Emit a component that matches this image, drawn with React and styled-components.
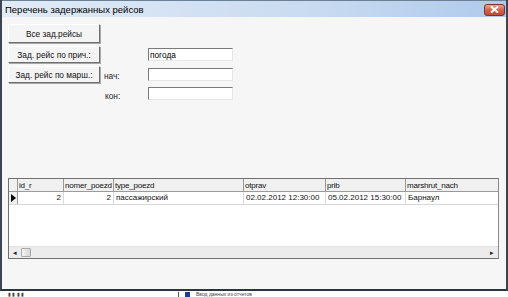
import React from "react";
import styled, { createGlobalStyle } from "styled-components";

const columns = [
  { key: "id_r", title: "id_r", width: 46, align: "right" },
  { key: "nomer_poezd", title: "nomer_poezd", width: 50, align: "right" },
  { key: "type_poezd", title: "type_poezd", width: 130, align: "left" },
  { key: "otprav", title: "otprav", width: 82, align: "left" },
  { key: "prib", title: "prib", width: 80, align: "left" },
  { key: "marshrut_nach", title: "marshrut_nach", width: 94, align: "left" },
];

const rows = [
  {
    id_r: "2",
    nomer_poezd: "2",
    type_poezd: "пассажирский",
    otprav: "02.02.2012 12:30:00",
    prib: "05.02.2012 15:30:00",
    marshrut_nach: "Барнаул",
  },
];

const App = () => {
  return (
    <>
      <Global />
      <Window>
        <TitleBar>
          <span>Перечень задержанных рейсов</span>
          <CloseButton>
            <svg width="9" height="7" viewBox="0 0 9 7">
              <path d="M1 0.5 L8 6.5 M8 0.5 L1 6.5" stroke="#fff" strokeWidth="2" />
            </svg>
          </CloseButton>
        </TitleBar>
        <Body>
          <Controls>
            <Button style={{ gridRow: 1 }}>Все зад.рейсы</Button>
            <Button style={{ gridRow: 2 }}>Зад. рейс по прич.:</Button>
            <Input style={{ gridRow: 2 }} defaultValue="погода" />
            <Button style={{ gridRow: 3 }}>Зад. рейс по марш.:</Button>
            <Label style={{ gridRow: 3 }}>нач:</Label>
            <Input style={{ gridRow: 3 }} />
            <Label style={{ gridRow: 4 }} $indent>кон:</Label>
            <Input style={{ gridRow: 4 }} />
          </Controls>
          <Grid>
            <HeaderRow>
              <Selector />
              {columns.map((c) => (
                <HeadCell key={c.key} $w={c.width}>
                  {c.title}
                </HeadCell>
              ))}
            </HeaderRow>
            {rows.map((r, i) => (
              <DataRow key={i}>
                <Selector>
                  <Arrow />
                </Selector>
                {columns.map((c) => (
                  <Cell key={c.key} $w={c.width} $align={c.align}>
                    {r[c.key]}
                  </Cell>
                ))}
              </DataRow>
            ))}
            <Empty />
            <ScrollBar>
              <ScrollArrow>◂</ScrollArrow>
              <Thumb />
              <Track />
              <ScrollArrow>▸</ScrollArrow>
            </ScrollBar>
          </Grid>
        </Body>
      </Window>
      <Desktop>
        <Fragment>▮ ▮ ▮ ▮</Fragment>
        <TaskIcon />
        <Fragment>Ввод данных из отчетов</Fragment>
      </Desktop>
    </>
  );
};

export default App;

const Global = createGlobalStyle`
  html, body {
    margin: 0;
    padding: 0;
    background: #ffffff;
    overflow: hidden;
  }
  body {
    font-family: "Liberation Sans", Arial, sans-serif;
  }
`;

const Window = styled.div`
  width: 504px;
  height: 289px;
  display: flex;
  flex-direction: column;
  border-left: 2px solid #3c4650;
  border-right: 2px solid #3c4650;
  border-bottom: 2px solid #2b3540;
  box-shadow: 0 1px 0 #40a8d0;
`;

const TitleBar = styled.div`
  height: 17px;
  display: flex;
  align-items: center;
  justify-content: space-between;
  padding: 0 1px 0 3px;
  border-top: 1px solid #6b7f95;
  background: linear-gradient(to right, #e2ebf6, #c9dbf0 60%, #afcaec);
  font-size: 9.5px;
  color: #000;
  box-sizing: border-box;
`;

const CloseButton = styled.div`
  width: 21px;
  height: 12px;
  border: 1px solid #7a3530;
  border-radius: 3px;
  background: linear-gradient(#eaa591, #d4634c 50%, #c24a33);
  display: flex;
  align-items: center;
  justify-content: center;
  box-sizing: border-box;
  margin-top: 1px;
`;

const Body = styled.div`
  flex: 1;
  background: #f6f6f6;
  padding: 7px 0 0 6px;
  display: flex;
  flex-direction: column;
`;

const Controls = styled.div`
  display: grid;
  grid-template-columns: 92px 48px 85px;
  grid-template-rows: 19px 17px 17px 15px;
  row-gap: 3px;
  align-items: center;
`;

const Button = styled.div`
  grid-column: 1;
  height: 100%;
  box-sizing: border-box;
  display: flex;
  align-items: center;
  justify-content: center;
  font-size: 8.3px;
  color: #111;
  background: #f4f4f4;
  border: 1px solid;
  border-color: #ffffff #6f6f6f #6f6f6f #ffffff;
  box-shadow: 1px 1px 0 #a8a8a8;
`;

const Label = styled.div`
  grid-column: 2;
  font-size: 8.3px;
  color: #222;
  padding-left: ${(p) => (p.$indent ? "5px" : "4px")};
  margin-top: ${(p) => (p.$indent ? "4px" : "2px")};
`;

const Input = styled.input`
  grid-column: 3;
  width: 85px;
  height: 13px;
  box-sizing: border-box;
  border: 1px solid;
  border-color: #7a7a7a #e6e6e6 #e6e6e6 #7a7a7a;
  background: #fff;
  padding: 0 1px;
  font-family: "Liberation Sans", Arial, sans-serif;
  font-size: 8.3px;
  color: #000;
  outline: none;
`;

const Grid = styled.div`
  margin-top: 77px;
  width: 491px;
  height: 81px;
  box-sizing: border-box;
  border: 1px solid #707070;
  border-right-color: #8a8a8a;
  background: #fff;
  display: flex;
  flex-direction: column;
  overflow: hidden;
  font-size: 8px;
`;

const HeaderRow = styled.div`
  display: flex;
  height: 12px;
  flex-shrink: 0;
  background: #f0f0f0;
  border-bottom: 1px solid #9a9a9a;
`;

const DataRow = styled.div`
  display: flex;
  height: 12px;
  flex-shrink: 0;
  border-bottom: 1px solid #d8d8d8;
`;

const Selector = styled.div`
  width: 8px;
  flex-shrink: 0;
  background: #f0f0f0;
  border-right: 1px solid #9a9a9a;
  display: flex;
  align-items: center;
  justify-content: center;
`;

const Arrow = styled.div`
  width: 0;
  height: 0;
  border-top: 4px solid transparent;
  border-bottom: 4px solid transparent;
  border-left: 5px solid #000;
`;

const HeadCell = styled.div`
  width: ${(p) => p.$w}px;
  flex-shrink: 0;
  box-sizing: border-box;
  padding: 0 1px;
  border-right: 1px solid #9a9a9a;
  line-height: 13px;
  letter-spacing: -0.2px;
  white-space: nowrap;
  overflow: hidden;
  color: #111;
`;

const Cell = styled.div`
  width: ${(p) => p.$w}px;
  flex-shrink: 0;
  box-sizing: border-box;
  padding: 0 2px;
  border-right: 1px solid #d8d8d8;
  line-height: 12px;
  text-align: ${(p) => p.$align};
  white-space: nowrap;
  overflow: hidden;
  color: #111;
`;

const Empty = styled.div`
  flex: 1;
`;

const ScrollBar = styled.div`
  height: 11px;
  flex-shrink: 0;
  display: flex;
  align-items: center;
  background: #ececec;
  border-top: 1px solid #e0e0e0;
`;

const ScrollArrow = styled.div`
  width: 12px;
  font-size: 7px;
  line-height: 11px;
  text-align: center;
  color: #222;
`;

const Thumb = styled.div`
  width: 10px;
  height: 9px;
  box-sizing: border-box;
  border: 1px solid #a9a9a9;
  border-radius: 1px;
  background: linear-gradient(to right, #f4f4f4, #d6d6d6);
`;

const Track = styled.div`
  flex: 1;
`;

const Desktop = styled.div`
  height: 6px;
  display: flex;
  align-items: flex-end;
  gap: 6px;
  padding-left: 8px;
  overflow: hidden;
  background: #ffffff;
`;

const Fragment = styled.div`
  font-size: 5px;
  line-height: 5px;
  color: #444;
  white-space: nowrap;
  &:first-child {
    width: 170px;
    border-right: 1px solid #555;
  }
`;

const TaskIcon = styled.div`
  width: 5px;
  height: 5px;
  background: #1d3a9a;
`;
